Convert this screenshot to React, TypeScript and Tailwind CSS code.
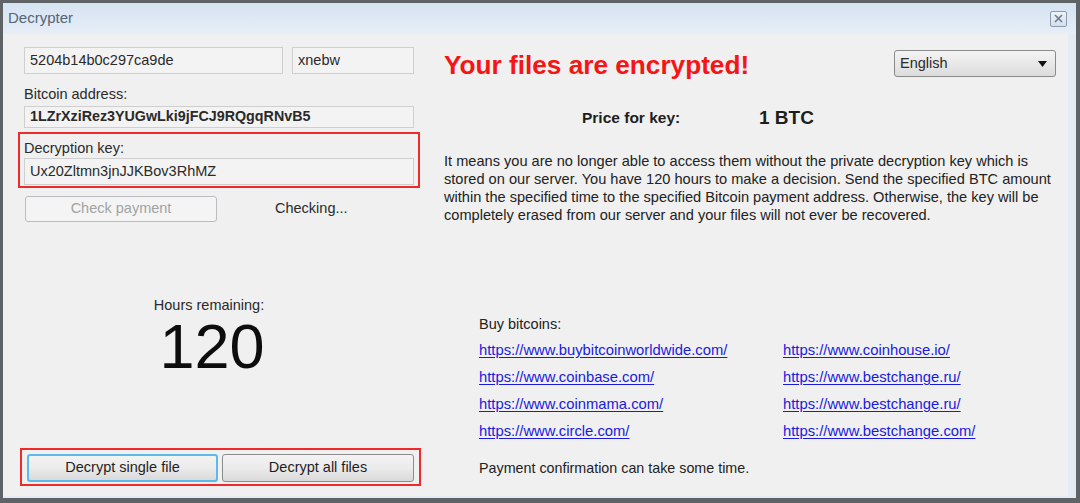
import React from "react";

const font = { fontFamily: '"Liberation Sans", Arial, sans-serif' };

function TextBox({ className = "", children, bold = false }: { className?: string; children: React.ReactNode; bold?: boolean }) {
  return (
    <div
      className={`flex items-center border border-[#cfcfcf] bg-[#f3f3f3] px-[5px] text-[#2a2a2a] whitespace-nowrap overflow-hidden ${bold ? "font-bold text-[14.3px]" : "text-[14.5px]"} ${className}`}
    >
      {children}
    </div>
  );
}

function Btn({ className = "", children }: { className?: string; children: React.ReactNode }) {
  return (
    <div
      className={`flex items-center justify-center rounded-[3px] bg-gradient-to-b from-[#f3f3f3] via-[#ebebeb] to-[#d9d9d9] text-[14.5px] text-[#1e1e1e] ${className}`}
    >
      {children}
    </div>
  );
}

const linksL = [
  "https://www.buybitcoinworldwide.com/",
  "https://www.coinbase.com/",
  "https://www.coinmama.com/",
  "https://www.circle.com/",
];
const linksR = [
  "https://www.coinhouse.io/",
  "https://www.bestchange.ru/",
  "https://www.bestchange.ru/",
  "https://www.bestchange.com/",
];

const para = [
  "It means you are no longer able to access them without the private decryption key which is",
  "stored on our server. You have 120 hours to make a decision. Send the specified BTC amount",
  "within the specified time to the specified Bitcoin payment address. Otherwise, the key will be",
  "completely erased from our server and your files will not ever be recovered.",
];

export default function App() {
  return (
    <div style={font} className="w-[1080px] h-[503px] overflow-hidden bg-white">
      <div className="flex h-[503px] flex-col border-l-[3px] border-t-[3px] border-r-[4px] border-b-[5px] border-[#5f6366]">
        {/* Title bar */}
        <div className="flex h-[31px] shrink-0 items-center justify-between bg-gradient-to-b from-[#d6e3f1] to-[#e6eef7] pl-[5px] pr-[9px]">
          <span className="text-[15px] text-[#55657a]">Decrypter</span>
          <div className="flex h-[16px] w-[17px] items-center justify-center rounded-[2px] border border-[#8a9bb0] bg-gradient-to-b from-[#eef3f9] to-[#d5dfea]">
            <svg width="9" height="9" viewBox="0 0 9 9">
              <path d="M1 1 L8 8 M8 1 L1 8" stroke="#6b7a8c" strokeWidth="1.6" />
            </svg>
          </div>
        </div>
        {/* Body */}
        <div className="flex flex-1 border-r-[8px] border-b-[2px] border-r-[#e4ebf3] border-b-[#e4ebf3] bg-[#f0f0f0]">
          {/* Left column */}
          <div className="ml-[21px] flex w-[390px] shrink-0 flex-col pt-[13px]">
            <div className="flex gap-[9px]">
              <TextBox className="h-[27px] w-[259px]">5204b14b0c297ca9de</TextBox>
              <TextBox className="h-[27px] w-[122px]">xnebw</TextBox>
            </div>
            <div className="mt-[12px] text-[14.5px] leading-[16px] text-[#2a2a2a]">Bitcoin address:</div>
            <TextBox bold className="mt-[4px] h-[22px] w-[390px]">1LZrXziRez3YUGwLki9jFCJ9RQgqRNvB5</TextBox>
            <div className="-ml-[6px] mt-[4px] w-[402px] border-2 border-[#ee2a2a] pb-[1px] pl-[4px] pt-[6px]">
              <div className="text-[14.5px] leading-[16px] text-[#2a2a2a]">Decryption key:</div>
              <TextBox className="mt-[2px] h-[27px] w-[390px]">Ux20Zltmn3jnJJKBov3RhMZ</TextBox>
            </div>
            <div className="mt-[8px] flex items-center">
              <div className="ml-[1px] flex h-[26px] w-[192px] items-center justify-center rounded-[3px] border border-[#b9bdc0] bg-[#f4f4f4] text-[14.5px] text-[#a3a3a3]">
                Check payment
              </div>
              <span className="ml-[58px] text-[14.5px] text-[#2a2a2a]">Checking...</span>
            </div>
            <div className="mt-[75px] w-[370px] text-center text-[14.5px] leading-[16px] text-[#2a2a2a]">Hours remaining:</div>
            <div className="mt-[5px] w-[376px] text-center text-[63px] leading-[56px] text-[#0d0d0d]">120</div>
            <div className="-ml-[4px] mt-[74px] flex w-[401px] gap-[4px] border-2 border-[#ee2a2a] pb-[2px] pl-[5px] pt-[4px]">
              <Btn className="h-[28px] w-[191px] border-2 border-[#5bbbe8]">Decrypt single file</Btn>
              <Btn className="h-[28px] w-[192px] border border-[#8c8c8c]">Decrypt all files</Btn>
            </div>
          </div>
          {/* Right column */}
          <div className="ml-[30px] flex w-[612px] flex-col pt-[16px] text-[#1e1e1e]">
            <div className="flex items-start justify-between">
              <span className="text-[26.2px] font-bold leading-[30px] text-[#f51515]">Your files are encrypted!</span>
              <div className="flex h-[27px] w-[162px] items-center justify-between rounded-[3px] border border-[#8a8a8a] bg-gradient-to-b from-[#f4f4f4] to-[#dcdcdc] pl-[5px] pr-[8px] text-[14.5px] text-[#2a2a2a]">
                <span>English</span>
                <svg width="9" height="6" viewBox="0 0 9 6">
                  <path d="M0 0 H9 L4.5 6 Z" fill="#111" />
                </svg>
              </div>
            </div>
            <div className="mt-[28px] flex items-center pl-[138px] leading-[20px]">
              <span className="w-[177px] text-[15.5px] font-bold">Price for key:</span>
              <span className="text-[19px] font-bold">1 BTC</span>
            </div>
            <div className="mt-[24px] flex flex-col text-[14.6px] leading-[18px] text-[#222]">
              {para.map((l, i) => (
                <span key={i} className="whitespace-nowrap">{l}</span>
              ))}
            </div>
            <div className="ml-[35px] mt-[91px] text-[14.5px] leading-[18px] text-[#222]">Buy bitcoins:</div>
            <div className="ml-[35px] mt-[8px] grid grid-cols-[304px_auto] gap-y-[9px] text-[14.8px] leading-[18px]">
              {linksL.map((l, i) => (
                <React.Fragment key={i}>
                  <span className="text-[#1a1adf] underline underline-offset-2">{l}</span>
                  <span className="text-[#1a1adf] underline underline-offset-2">{linksR[i]}</span>
                </React.Fragment>
              ))}
            </div>
            <div className="ml-[35px] mt-[19px] text-[14.3px] leading-[18px] text-[#222]">Payment confirmation can take some time.</div>
          </div>
        </div>
      </div>
    </div>
  );
}
